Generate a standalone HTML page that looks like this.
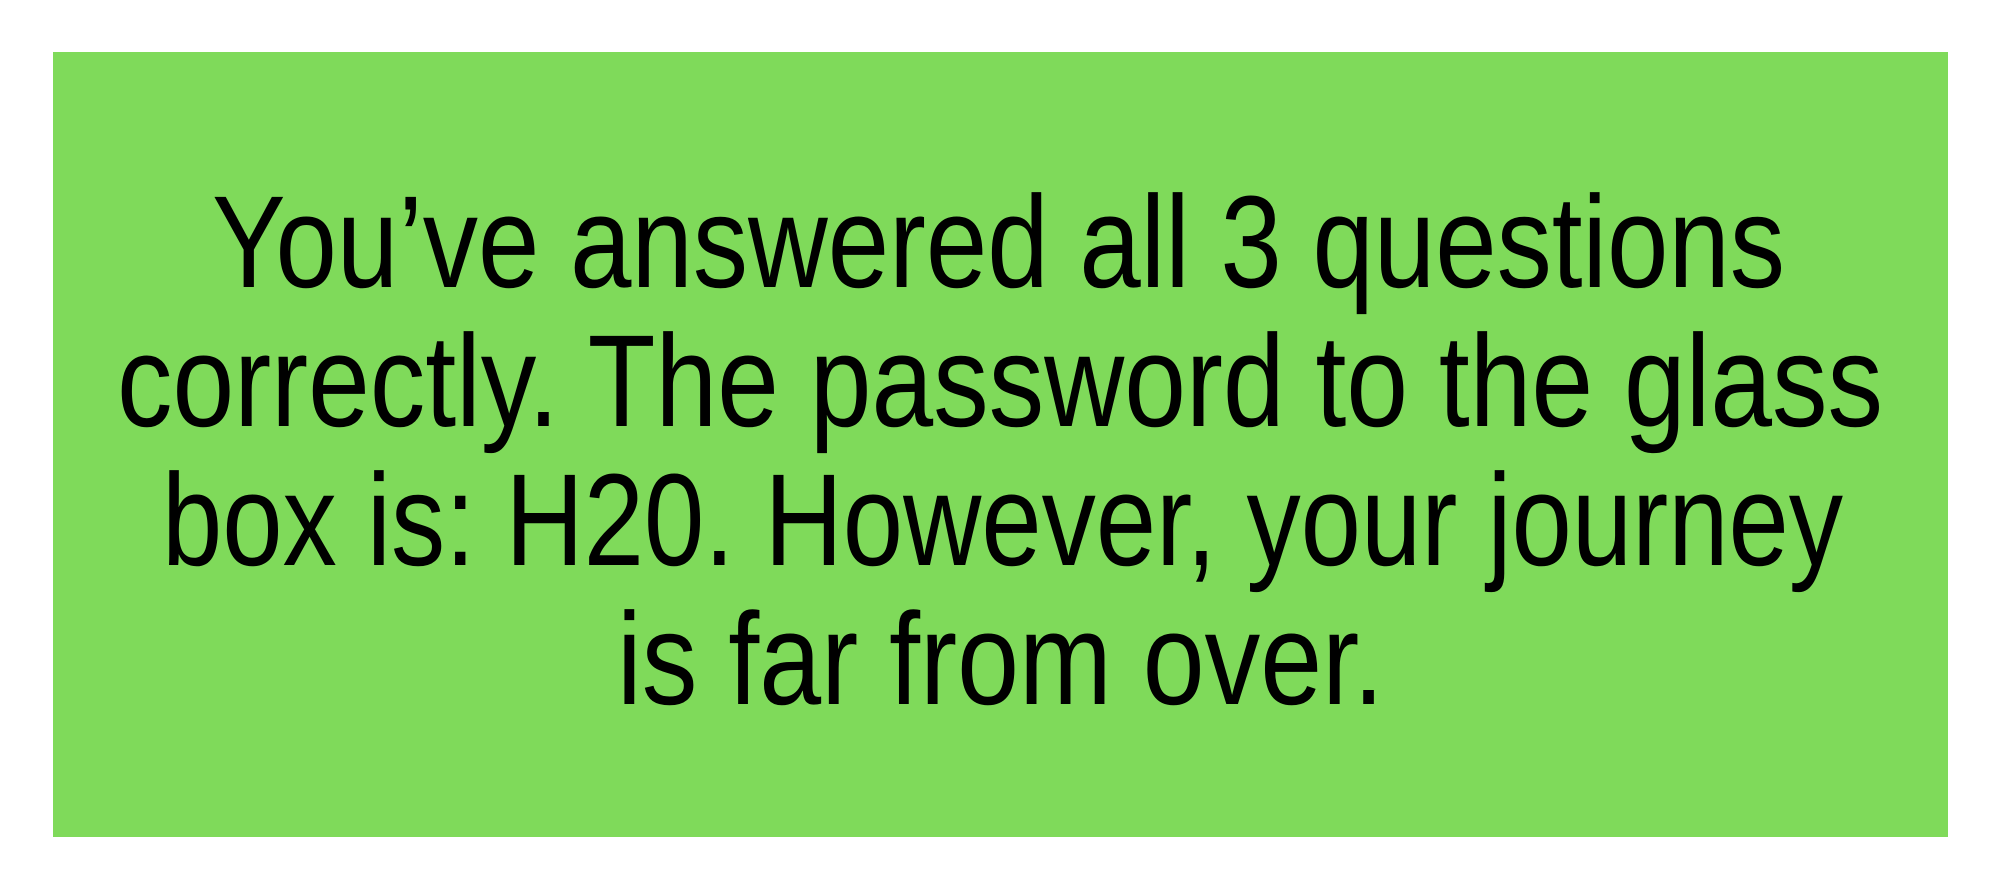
<!DOCTYPE html>
<html><head><meta charset="utf-8"><style>
html,body{margin:0;padding:0;background:#fff;width:2000px;height:889px;overflow:hidden}
svg{display:block}
text{font-family:"Liberation Sans Narrow","Liberation Sans",sans-serif;font-size:131px;fill:#000}
</style></head><body>
<svg width="2000" height="889" viewBox="0 0 2000 889" xmlns="http://www.w3.org/2000/svg">
<rect x="0" y="0" width="2000" height="889" fill="#fff"/>
<rect x="53" y="52" width="1895" height="785" fill="#7fda5a"/>
<text x="212" y="287" textLength="1573" lengthAdjust="spacingAndGlyphs">You’ve answered all 3 questions</text>
<text x="117" y="426" textLength="1766" lengthAdjust="spacingAndGlyphs">correctly. The password to the glass</text>
<text x="162" y="565" textLength="1681" lengthAdjust="spacingAndGlyphs">box is: H20. However, your journey</text>
<text x="617" y="704" textLength="767" lengthAdjust="spacingAndGlyphs">is far from over.</text>
</svg>
</body></html>
